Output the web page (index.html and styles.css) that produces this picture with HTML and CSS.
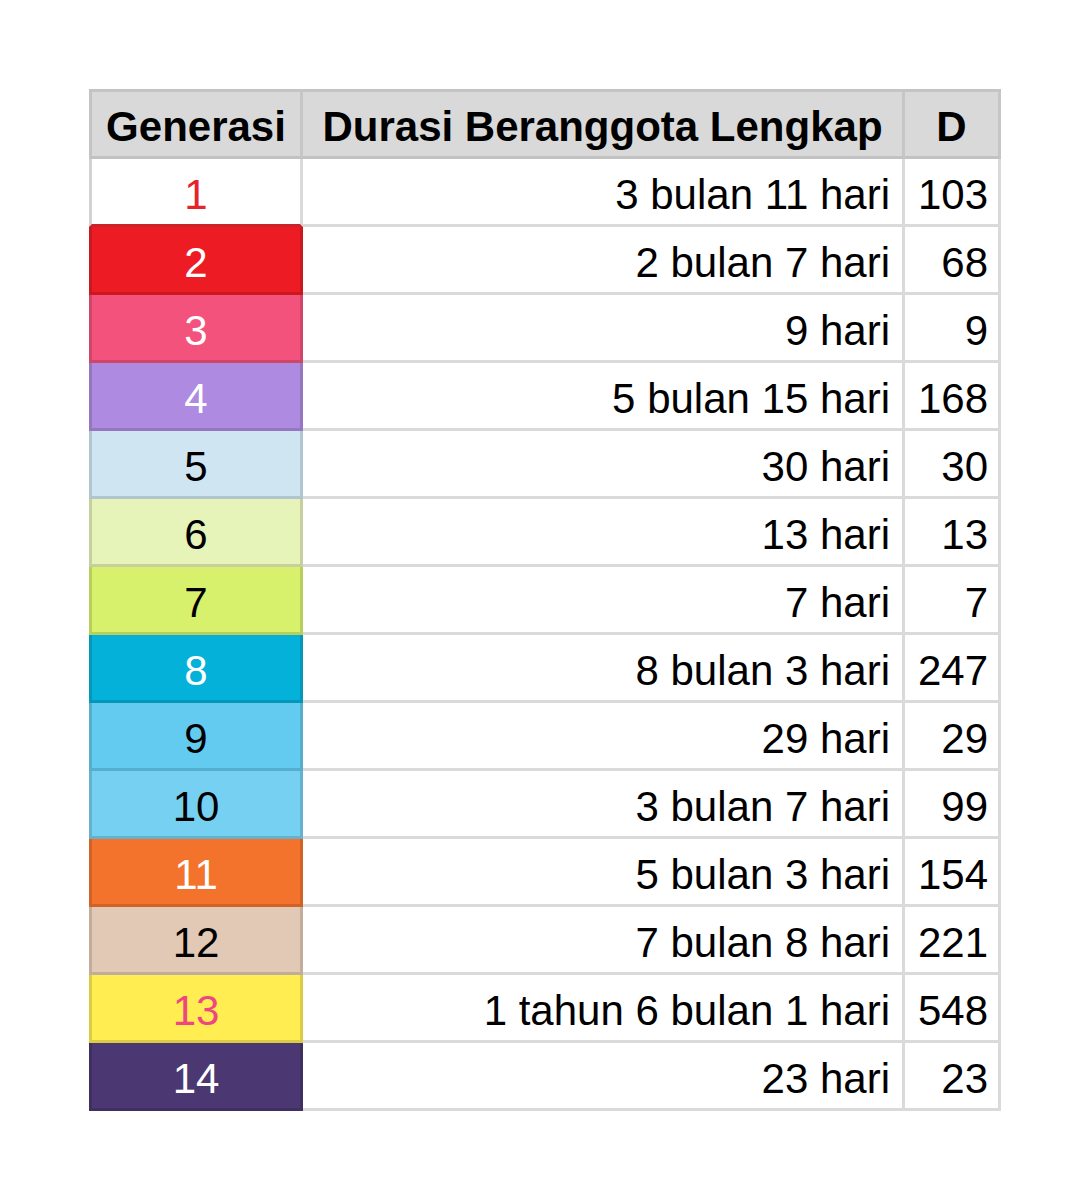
FILE: index.html
```html
<!DOCTYPE html>
<html lang="id">
<head>
<meta charset="utf-8">
<title>Generasi</title>
<link rel="stylesheet" href="styles.css">
</head>
<body>
<table class="gen-table">
  <colgroup>
    <col class="c1"><col class="c2"><col class="c3">
  </colgroup>
  <thead>
    <tr class="head">
      <th class="h1">Generasi</th>
      <th>Durasi Beranggota Lengkap</th>
      <th>D</th>
    </tr>
  </thead>
  <tbody>
    <tr><td class="g g1">1</td><td class="dur">3 bulan 11 hari</td><td class="num">103</td></tr>
    <tr><td class="g g2">2</td><td class="dur">2 bulan 7 hari</td><td class="num">68</td></tr>
    <tr><td class="g g3">3</td><td class="dur">9 hari</td><td class="num">9</td></tr>
    <tr><td class="g g4">4</td><td class="dur">5 bulan 15 hari</td><td class="num">168</td></tr>
    <tr><td class="g g5">5</td><td class="dur">30 hari</td><td class="num">30</td></tr>
    <tr><td class="g g6">6</td><td class="dur">13 hari</td><td class="num">13</td></tr>
    <tr><td class="g g7">7</td><td class="dur">7 hari</td><td class="num">7</td></tr>
    <tr><td class="g g8">8</td><td class="dur">8 bulan 3 hari</td><td class="num">247</td></tr>
    <tr><td class="g g9">9</td><td class="dur">29 hari</td><td class="num">29</td></tr>
    <tr><td class="g g10">10</td><td class="dur">3 bulan 7 hari</td><td class="num">99</td></tr>
    <tr><td class="g g11">11</td><td class="dur">5 bulan 3 hari</td><td class="num">154</td></tr>
    <tr><td class="g g12">12</td><td class="dur">7 bulan 8 hari</td><td class="num">221</td></tr>
    <tr><td class="g g13">13</td><td class="dur">1 tahun 6 bulan 1 hari</td><td class="num">548</td></tr>
    <tr><td class="g g14">14</td><td class="dur">23 hari</td><td class="num">23</td></tr>
  </tbody>
</table>
</body>
</html>
```
FILE: styles.css
```css
html, body {
  margin: 0;
  padding: 0;
  background: #ffffff;
}

body {
  padding: 89px 0 0 89px;
  font-family: Arial, "Liberation Sans", Helvetica, sans-serif;
}

.gen-table {
  border-collapse: separate;
  border-spacing: 0;
  table-layout: fixed;
  width: 912px;
  border-top: 3px solid #c4c4c4;
  font-size: 42px;
  color: #000;
}

.c1 { width: 214px; }
.c2 { width: 602px; }
.c3 { width: 96px; }

.gen-table th,
.gen-table td {
  box-sizing: border-box;
  border-right: 3px solid #dadada;
  border-bottom: 3px solid #dadada;
  padding: 0;
  vertical-align: middle;
  line-height: 1;
  white-space: nowrap;
}

.head { height: 67px; }

.gen-table th {
  background: #d9d9d9;
  font-weight: bold;
  text-align: center;
  border-right-color: #c6c6c6;
  border-bottom-color: #c2c2c2;
  padding-top: 6px;
}

.gen-table th.h1 {
  border-left: 3px solid #c4c4c4;
}

.gen-table tbody tr { height: 68px; }

.gen-table td {
  padding-top: 6px;
}

.gen-table td.g {
  text-align: center;
  border-left: 3px solid rgba(0, 0, 0, 0.14);
  border-right-color: rgba(0, 0, 0, 0.14);
  border-bottom-color: rgba(0, 0, 0, 0.14);
}

.gen-table td.g1 {
  color: #e5232b;
  border-left-color: #d2d2d2;
  border-right-color: #dadada;
  border-bottom-color: #c9242b;
}

.g2 { background: #ed1c24; color: #fff; }
.g3 { background: #f2527b; color: #fff; }
.g4 { background: #ae8ae1; color: #fff; }
.g5 { background: #d0e5f2; }
.g6 { background: #e6f3b9; }
.g7 { background: #d7f16c; }
.g8 { background: #04b1d9; color: #fff; }
.g9 { background: #63cbf0; }
.g10 { background: #76d0f1; }
.g11 { background: #f3732c; color: #fff; }
.g12 { background: #e2c9b5; }
.g13 { background: #ffed51; color: #ef4681; }
.g14 { background: #4b3873; color: #fff; }

.gen-table td.dur {
  text-align: right;
  padding-right: 12px;
}

.gen-table td.num {
  text-align: right;
  padding-right: 10px;
}
```
